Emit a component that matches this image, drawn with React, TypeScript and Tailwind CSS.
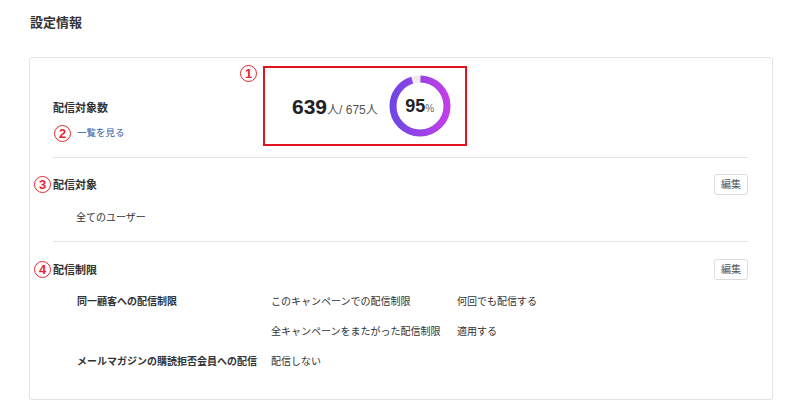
import React from 'react';

const Mark: React.FC<{ n: string; className?: string }> = ({ n, className = '' }) => (
  <span
    className={`absolute flex items-center justify-center w-[17px] h-[17px] rounded-full border-[1.5px] border-[#e3262f] text-[#e3262f] text-[13px] font-bold leading-none ${className}`}
  >
    {n}
  </span>
);

const EditButton: React.FC = () => (
  <button
    type="button"
    className="w-[34px] h-[21px] border border-[#dcdcdc] rounded-[3px] bg-white text-[10px] font-normal leading-none text-[#555]"
  >
    編集
  </button>
);

const Donut: React.FC<{ percent: number }> = ({ percent }) => {
  const r = 27;
  const c = 2 * Math.PI * r;
  const len = (c * percent) / 100;
  return (
    <div className="relative w-[62px] h-[62px]">
      <svg width="62" height="62" viewBox="0 0 62 62">
        <defs>
          <linearGradient id="ring" x1="0" y1="0" x2="62" y2="0" gradientUnits="userSpaceOnUse">
            <stop offset="0%" stopColor="#6a46e4" />
            <stop offset="100%" stopColor="#c73ee8" />
          </linearGradient>
        </defs>
        <circle cx="31" cy="31" r={r} fill="none" stroke="#ececec" strokeWidth="7" />
        <circle
          cx="31"
          cy="31"
          r={r}
          fill="none"
          stroke="url(#ring)"
          strokeWidth="7"
          strokeDasharray={`${len} ${c - len}`}
          strokeDashoffset={c / 4}
        />
      </svg>
      <div className="absolute inset-0 flex items-center justify-center">
        <span className="text-[18px] font-bold text-[#222] leading-none">{percent}</span>
        <span className="text-[10px] text-[#666] leading-none mt-[5px]">%</span>
      </div>
    </div>
  );
};

const LIMIT_ROWS = [
  { label: '同一顧客への配信制限', name: 'このキャンペーンでの配信制限', value: '何回でも配信する' },
  { label: '', name: '全キャンペーンをまたがった配信制限', value: '適用する' },
  { label: 'メールマガジンの購読拒否会員への配信', name: '配信しない', value: '' },
];

const App: React.FC = () => {
  return (
    <div
      className="min-h-screen bg-white text-[#333]"
      style={{ fontFamily: '"Liberation Sans", "Noto Sans CJK JP", sans-serif' }}
    >
      {/* Title */}
      <div className="pl-[30px] pt-[14px] h-[32px]">
        <h2 className="text-[13px] font-bold leading-[18px] text-[#333]">設定情報</h2>
      </div>

      {/* Card */}
      <div className="ml-[29px] mr-[13px] mt-[25px] border border-[#e2e2e2] rounded-[3px] pl-[23px] pr-[24px]">
        {/* Target count */}
        <div className="flex pt-[8px] pb-[11px] border-b border-[#e4e4e4]">
          <div className="w-[210px] pt-[35px]">
            <div className="text-[11px] font-bold leading-[14px]">配信対象数</div>
            <div className="relative mt-[11px] pl-[24px] text-[10px] leading-[14px]">
              <Mark n="2" className="left-[1px] top-[-1px]" />
              <a href="#" className="text-[9.5px] leading-[14px] text-[#2a5caa]">一覧を見る</a>
            </div>
          </div>
          <div className="relative">
            <Mark n="1" className="left-[-23px] top-[-1px]" />
            <div className="w-[204px] h-[80px] border-2 border-[#e0141f] flex items-center pl-[27px] gap-[11px]">
              <div className="flex items-baseline text-[#222]">
                <span className="text-[21px] font-bold leading-none">639</span>
                <span className="text-[12px] text-[#555] leading-none">人/ 675人</span>
              </div>
              <Donut percent={95} />
            </div>
          </div>
        </div>

        {/* Target */}
        <div className="pt-[16px] pb-[16px] border-b border-[#e4e4e4]">
          <div className="relative flex items-center justify-between h-[21px]">
            <Mark n="3" className="left-[-19px] top-[2px]" />
            <span className="text-[11px] font-bold leading-[14px]">配信対象</span>
            <EditButton />
          </div>
          <div className="mt-[16px] pl-[23px] text-[10px] leading-[14px]">全てのユーザー</div>
        </div>

        {/* Limit */}
        <div className="pt-[17px] pb-[22px]">
          <div className="relative flex items-center justify-between h-[21px]">
            <Mark n="4" className="left-[-19px] top-[2px]" />
            <span className="text-[11px] font-bold leading-[14px]">配信制限</span>
            <EditButton />
          </div>
          <div className="mt-[7px] pl-[24px]">
            {LIMIT_ROWS.map((row, i) => (
              <div key={i} className="grid grid-cols-[194px_186px_1fr] h-[30px] items-center text-[10px] leading-[14px]">
                <span className="font-bold">{row.label}</span>
                <span>{row.name}</span>
                <span>{row.value}</span>
              </div>
            ))}
          </div>
        </div>
      </div>
    </div>
  );
};

export default App;
